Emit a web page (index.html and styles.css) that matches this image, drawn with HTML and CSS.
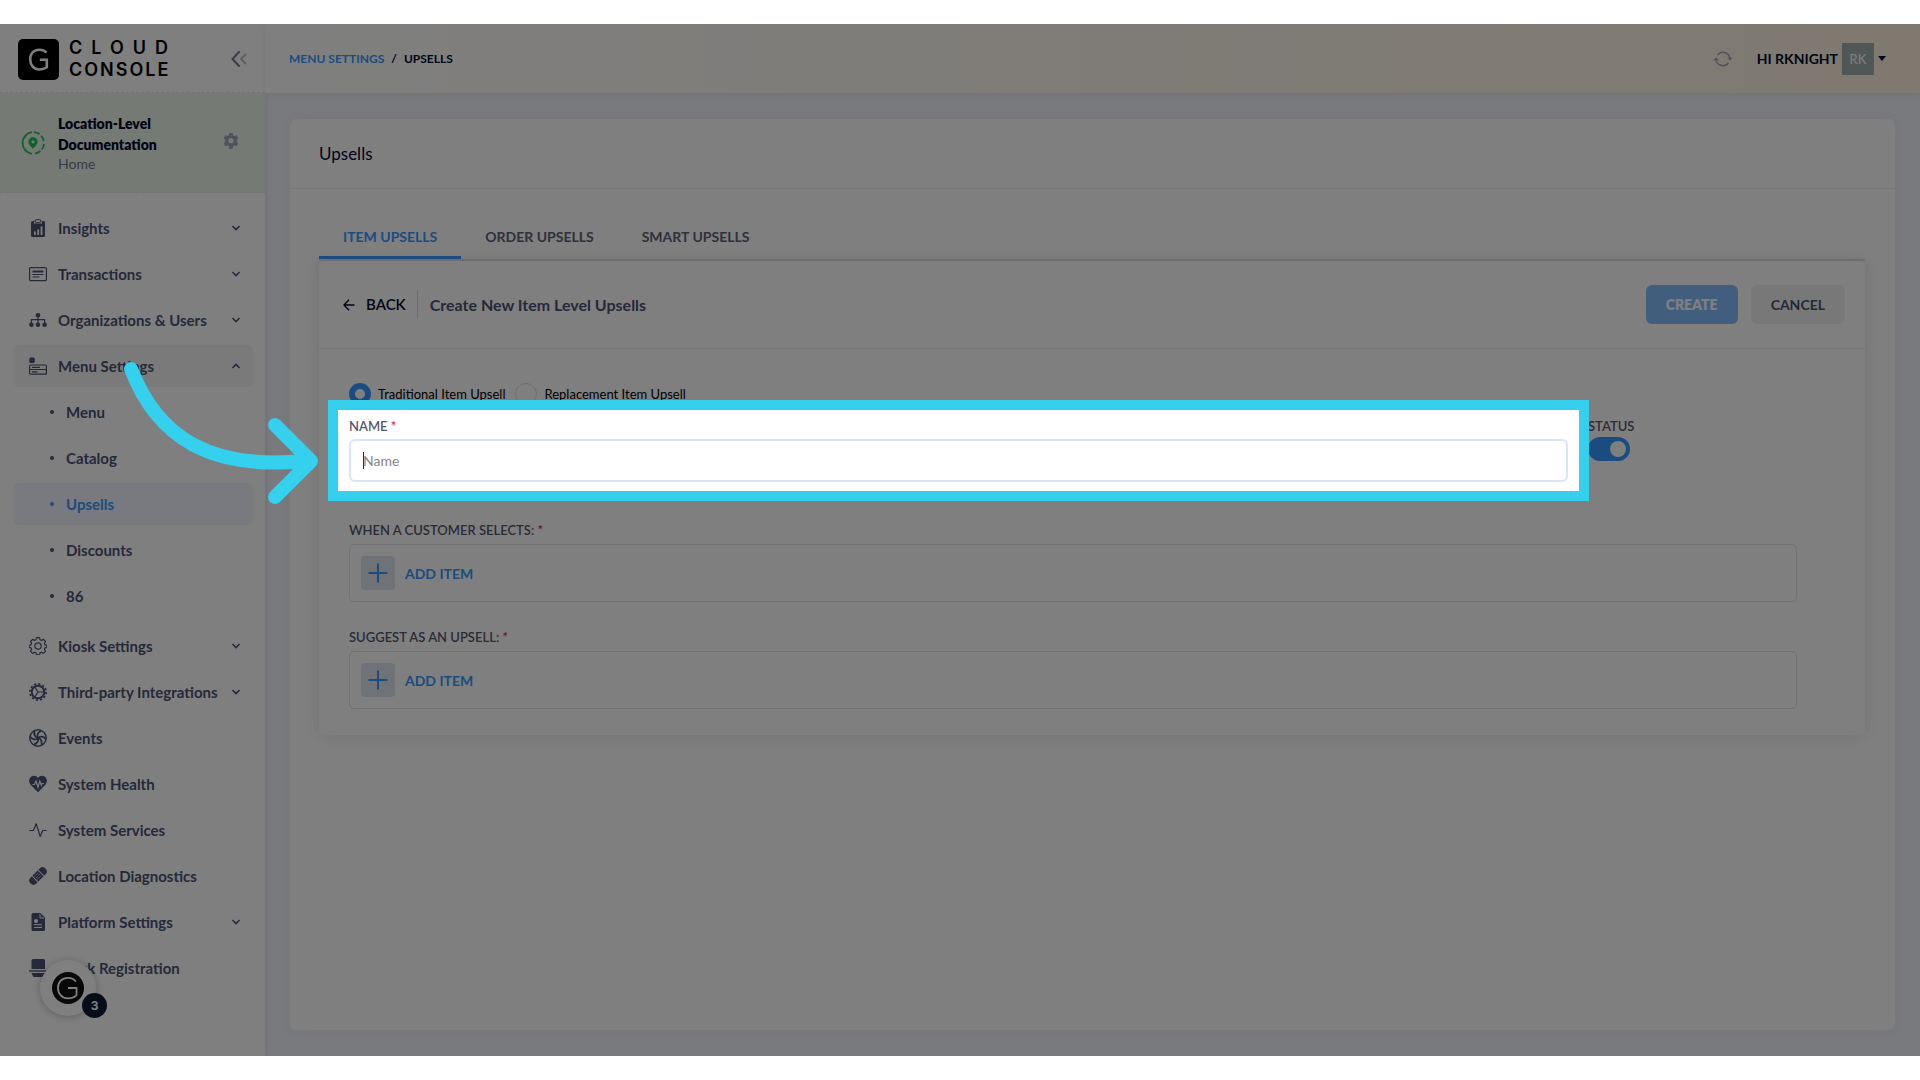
FILE: index.html
```html
<!DOCTYPE html>
<html lang="en">

<head>
    <meta charset="UTF-8">
    <meta name="viewport" content="width=device-width, initial-scale=1.0">
    <title>Cloud Console - Upsells</title>
    <link rel="stylesheet" href="styles.css">
</head>

<body>
    <!-- shared icons -->
    <svg class="sprite" aria-hidden="true">
        <symbol id="chevron" viewBox="0 0 10 10"><path d="M1.5 3l3.5 3.6L8.500 3" fill="none" stroke="currentColor" stroke-width="1.6"/></symbol>
        <symbol id="plus" viewBox="0 0 20 20"><path d="M10 .5v19M.5 10h19" stroke="currentColor" stroke-width="2"/></symbol>
    </svg>

    <div class="app">
        <aside class="sidebar">
            <div class="brand">
                <a href="#" class="logo">
                    <svg class="logo-mark" viewBox="0 0 41 41" aria-hidden="true">
                        <rect width="41" height="41" rx="5" fill="#000"/>
                        <path d="M28.500 13.500C26.500 11.500 24.500 10.700 21.500 10.700c-5.800 0-9.300 4-9.300 9.800s3.600 10 9.300 10c3.200 0 5.400-.8 7.300-2.200v-7.600h-7" fill="none" stroke="#fff" stroke-width="2.600"/>
                    </svg>
                    <span class="logo-text">
                        <span class="logo-cloud">CLOUD</span>
                        <span class="logo-console">CONSOLE</span>
                    </span>
                </a>
                <button type="button" class="collapse" aria-label="Collapse menu">
                    <svg width="16" height="16" viewBox="0 0 16 16" fill="none" stroke="currentColor" stroke-width="2" stroke-linecap="round"><path d="M8 1L1.500 8 8 15"/><path d="M14.500 3.500L10 8l4.500 4.500" opacity=".5"/></svg>
                </button>
            </div>

            <div class="location">
                <svg class="location-icon" viewBox="0 0 24 24" aria-hidden="true">
                    <path d="M11 1.200A10.900 10.900 0 0 0 11 22.800" fill="none" stroke="#1bc553" stroke-width="1.800"/>
                    <path d="M13 1.200A10.900 10.900 0 0 1 22.900 11M22.900 13A10.900 10.900 0 0 1 13 22.800" fill="none" stroke="#1bc553" stroke-width="1.800" stroke-dasharray="6 2"/>
                    <path d="M12 6.200a4.600 4.600 0 0 0-4.600 4.600c0 3 4.600 7 4.600 7s4.600-4 4.600-7A4.600 4.600 0 0 0 12 6.200zm0 3a1.600 1.600 0 1 1 0 3.200 1.600 1.600 0 0 1 0-3.200z" fill="#1bc553"/>
                </svg>
                <div class="location-text">
                    <strong>Location-Level Documentation</strong>
                    <span>Home</span>
                </div>
                <button type="button" class="location-gear" aria-label="Location settings">
                    <svg width="16" height="16" viewBox="0 0 24 24" fill="currentColor"><path fill-rule="evenodd" d="M9.500 0h5l.6 3.200 2.300 1.300 3.100-1.200 2.500 4.400-2.500 2.100v3.400l2.500 2.100-2.500 4.400-3.100-1.200-2.300 1.300-.6 4.200h-5l-.6-4.200-2.300-1.300-3.100 1.200L1 15.300l2.500-2.100V9.800L1 7.700l2.500-4.400 3.100 1.200 2.300-1.300zM12 7.500a4 4 0 1 0 0 8 4 4 0 0 0 0-8z"/></svg>
                </button>
            </div>

            <nav class="menu">
                <ul>
                    <li><a href="#">
                        <svg class="icon" viewBox="0 0 18 18"><path fill="currentColor" fill-rule="evenodd" d="M3.500 2H5v2.500h8V2h1.500A1.500 1.500 0 0 1 16 3.500v13a1.500 1.500 0 0 1-1.500 1.500h-11A1.500 1.500 0 0 1 2 16.500v-13A1.500 1.500 0 0 1 3.500 2zM5 12.500V16h1.800v-3.500zm3.300-2V16h1.800v-5.500zm3.300-3V16h1.800V7.500z"/><rect x="6" y=".6" width="6" height="3" rx="1.500" fill="none" stroke="currentColor"/></svg>
                        <span>Insights</span><svg class="chevron"><use href="#chevron"/></svg></a></li>
                    <li><a href="#">
                        <svg class="icon" viewBox="0 0 18 18" fill="none" stroke="currentColor"><rect x=".6" y="2.600" width="16.800" height="13" rx="1" stroke-width="1.200"/><path d="M3.500 6.500h11" stroke-width="2"/><path d="M3.500 9.500h11M3.500 12h7" stroke-width="1.200"/></svg>
                        <span>Transactions</span><svg class="chevron"><use href="#chevron"/></svg></a></li>
                    <li><a href="#">
                        <svg class="icon" viewBox="0 0 18 18"><g fill="currentColor"><circle cx="9" cy="4.200" r="2.300"/><circle cx="2.400" cy="13.800" r="2.300"/><circle cx="9" cy="13.800" r="2.300"/><circle cx="15.600" cy="13.800" r="2.300"/></g><path d="M9 5v8M2.400 13V8.600h13.200V13" fill="none" stroke="currentColor" stroke-width="1.200"/></svg>
                        <span>Organizations &amp; Users</span><svg class="chevron"><use href="#chevron"/></svg></a></li>
                    <li><a href="#" class="open">
                        <svg class="icon" viewBox="0 0 18 18"><rect x=".3" y=".5" width="5.500" height="5.500" rx="1.500" fill="currentColor"/><g fill="none" stroke="currentColor" stroke-width="1.200"><rect x=".6" y="8" width="16.800" height="9.200" rx="1"/><path d="M.6 12.500h16.800M3 10.300h8M3 14.900h5.500"/></g></svg>
                        <span>Menu Settings</span><svg class="chevron up"><use href="#chevron"/></svg></a>
                        <ul class="submenu">
                            <li><a href="#">Menu</a></li>
                            <li><a href="#">Catalog</a></li>
                            <li><a href="#" class="active">Upsells</a></li>
                            <li><a href="#">Discounts</a></li>
                            <li><a href="#">86</a></li>
                        </ul>
                    </li>
                    <li><a href="#">
                        <svg class="icon" viewBox="0 0 18 18" fill="none" stroke="currentColor" stroke-width="1.200"><circle cx="9" cy="9" r="3.200"/><path d="M7.500.7h3l.5 2 1.500.7 1.900-1 2.100 2.100-1.100 1.800.6 1.500 2 .5v2l-2 .6-.6 1.500 1.100 1.900-2.100 2.100-1.900-1.100-1.500.6-.5 2h-3l-.5-2-1.500-.6-1.900 1.100-2.100-2.100 1.100-1.900-.6-1.500-2-.6v-2l2-.5.6-1.500-1.100-1.800 2.100-2.100 1.900 1L7 2.700z" stroke-linejoin="round"/></svg>
                        <span>Kiosk Settings</span><svg class="chevron"><use href="#chevron"/></svg></a></li>
                    <li><a href="#">
                        <svg class="icon" viewBox="0 0 18 18" fill="none" stroke="currentColor"><circle cx="9" cy="9" r="6.300" stroke-width="2"/><circle cx="9" cy="9" r="8.100" stroke-width="1.700" stroke-dasharray="2.200 2.040"/><path d="M9 9l-3.200-5M9 9h6M9 9l-3.200 5" stroke-width="1.200"/></svg>
                        <span>Third-party Integrations</span><svg class="chevron"><use href="#chevron"/></svg></a></li>
                    <li><a href="#">
                        <svg class="icon" viewBox="0 0 18 18" fill="none" stroke="currentColor"><circle cx="9" cy="9" r="8.200" stroke-width="1.500"/><g stroke-width="1.800"><path d="M9 9C7.500 6.500 8.500 3.500 12 2"/><path d="M9 9c2.200-2 5.200-2 7.500 1"/><path d="M9 9c2.800.8 4.300 3.500 3.500 7"/><path d="M9 9c.8 2.800-.8 5.800-4 6.500"/><path d="M9 9c-2 2.200-5.200 2-7.500-1"/><path d="M9 9C6.200 8.200 4.700 5.500 5.500 2"/></g></svg>
                        <span>Events</span></a></li>
                    <li><a href="#">
                        <svg class="icon" viewBox="0 0 18 18"><path d="M9 17.200L1.800 10C-.6 7.300-.2 3.800 1.800 2 4 0 7.300.5 9 3c1.700-2.500 5-3 7.200-1 2 1.800 2.400 5.300 0 8z" fill="currentColor"/><path d="M3.500 9.500h2L7 6.200l2 6 1.800-6 1.500 4 .8-1.700h1.700" fill="none" stroke="#fff" stroke-width="1.200"/></svg>
                        <span>System Health</span></a></li>
                    <li><a href="#">
                        <svg class="icon" viewBox="0 0 18 18" fill="none" stroke="currentColor" stroke-width="1.200" stroke-linejoin="round"><path d="M.3 9.500h4.200L7.200 2.800l4 12.700 2.500-6h4"/></svg>
                        <span>System Services</span></a></li>
                    <li><a href="#">
                        <svg class="icon" viewBox="0 0 18 18"><g transform="rotate(-45 9 9)"><rect x="-1.500" y="4.800" width="21" height="8.400" rx="4" fill="currentColor"/><path d="M4.800 4.800v8.400M13.200 4.800v8.400" stroke="#fff"/><path d="M6.300 7h5.500M6.300 9h5.500M6.300 11h5.500" stroke="#fff" stroke-width=".9" stroke-dasharray="1 1"/></g></svg>
                        <span>Location Diagnostics</span></a></li>
                    <li><a href="#">
                        <svg class="icon" viewBox="0 0 18 18"><path d="M4 0h7.500L16 4.500V16.500A1.500 1.500 0 0 1 14.500 18H4a1.500 1.500 0 0 1-1.500-1.500v-15A1.500 1.500 0 0 1 4 0z" fill="currentColor"/><path d="M11 1v4h4M5 11.700h8M5 14.500h8" fill="none" stroke="#fff"/><circle cx="7" cy="8" r="2" fill="#fff"/></svg>
                        <span>Platform Settings</span><svg class="chevron"><use href="#chevron"/></svg></a></li>
                    <li><a href="#">
                        <svg class="icon" viewBox="0 0 18 18"><path d="M4 0h10.500A1.500 1.500 0 0 1 16 1.500V10H2.500V1.500A1.500 1.500 0 0 1 4 0zM2.500 14H16l-1.300 3a1.500 1.500 0 0 1-1.400 1H5.200a1.500 1.500 0 0 1-1.400-1z" fill="currentColor"/><path d="M0 12h18" stroke="currentColor" stroke-width="1.400"/></svg>
                        <span>Kiosk Registration</span></a></li>
                </ul>
            </nav>
        </aside>

        <div class="content">
            <header class="topbar">
                <div class="breadcrumb">
                    <a href="#">MENU SETTINGS</a>
                    <span>/</span>
                    <span>UPSELLS</span>
                </div>
                <div class="user">
                    <button type="button" class="refresh" aria-label="Refresh">
                        <svg width="20" height="16" viewBox="0 0 20 16" fill="none" stroke="currentColor" stroke-width="1.600"><path d="M4.500 4A7 7 0 0 1 17 8M15.500 12A7 7 0 0 1 3 8"/><path d="M14.200 6.800L17 9.800l2.700-3zM5.800 9.200L3 6.200l-2.700 3z" fill="currentColor" stroke="none"/></svg>
                    </button>
                    <span class="user-name">HI RKNIGHT</span>
                    <span class="avatar">RK</span>
                    <span class="caret"></span>
                </div>
            </header>

            <main class="card">
                <h1>Upsells</h1>
                <div class="card-body">
                    <div class="tabs">
                        <a href="#" class="active">ITEM UPSELLS</a>
                        <a href="#">ORDER UPSELLS</a>
                        <a href="#">SMART UPSELLS</a>
                    </div>

                    <form class="panel">
                        <div class="panel-header">
                            <a href="#" class="back">
                                <svg width="12" height="12" viewBox="0 0 12 12" fill="none" stroke="currentColor" stroke-width="1.400"><path d="M11.500 6H1M6 .8L.9 6 6 11.200"/></svg>
                                BACK
                            </a>
                            <h2>Create New Item Level Upsells</h2>
                            <div class="actions">
                                <button type="submit" class="btn btn-primary">CREATE</button>
                                <button type="button" class="btn">CANCEL</button>
                            </div>
                        </div>

                        <div class="panel-body">
                            <div class="radios">
                                <label><input type="radio" name="type" checked> Traditional Item Upsell</label>
                                <label><input type="radio" name="type"> Replacement Item Upsell</label>
                            </div>

                            <div class="row">
                                <div class="field name-field">
                                    <label for="name">NAME <em>*</em></label>
                                    <input type="text" id="name" placeholder="Name">
                                </div>
                                <div class="field status-field">
                                    <label for="status">STATUS</label>
                                    <input type="checkbox" id="status" class="switch" checked>
                                </div>
                            </div>

                            <div class="field">
                                <span class="label">WHEN A CUSTOMER SELECTS: <em>*</em></span>
                                <div class="items">
                                    <button type="button" class="add"><span class="add-icon"><svg width="20" height="20"><use href="#plus"/></svg></span>ADD ITEM</button>
                                </div>
                            </div>

                            <div class="field">
                                <span class="label">SUGGEST AS AN UPSELL: <em>*</em></span>
                                <div class="items">
                                    <button type="button" class="add"><span class="add-icon"><svg width="20" height="20"><use href="#plus"/></svg></span>ADD ITEM</button>
                                </div>
                            </div>
                        </div>
                    </form>
                </div>
            </main>
        </div>

        <button type="button" class="chat" aria-label="Open help">
            <svg width="32" height="32" viewBox="0 0 32 32"><circle cx="16" cy="16" r="16" fill="#111"/><path d="M24 9.500C22 7 19.500 5.800 16 5.800 9.800 5.800 6 10 6 16s4 10.400 10 10.400c3.600 0 6.400-1.200 8.500-3V16H16" fill="none" stroke="#fff" stroke-width="1.800"/></svg>
            <span class="badge">3</span>
        </button>

        <!-- tour pointer -->
        <svg class="arrow" width="200" height="150" viewBox="0 0 200 150" aria-hidden="true">
            <path d="M11 10C38 80 92 111 184 102M155 66l36 36-36 36" fill="none" stroke="#34d0ed" stroke-width="14" stroke-linecap="round" stroke-linejoin="round"/>
        </svg>
    </div>
</body>

</html>
```
FILE: styles.css
```css
* {
    box-sizing: border-box;
}

body {
    font-family: Lato, "Liberation Sans", sans-serif;
    font-size: 14px;
    margin: 0;
    padding: 24px 0;
    background-color: #fff;
    color: #00082e;
}

ul {
    list-style: none;
    margin: 0;
    padding: 0;
}

a {
    text-decoration: none;
    color: inherit;
}

button {
    font: inherit;
    color: inherit;
    border: none;
    background: none;
    padding: 0;
    cursor: pointer;
}

.sprite {
    display: none;
}

.app {
    position: relative;
    display: flex;
    min-height: calc(100vh - 48px);
    overflow: hidden;
    background-color: #f3f4fb;
}

/* sidebar */
.sidebar {
    flex: 0 0 265px;
    background-color: #fff;
    box-shadow: 0 0 6px rgba(60, 60, 90, 0.15);
}

.brand {
    display: flex;
    align-items: center;
    justify-content: space-between;
    height: 69px;
    padding: 2px 18px 0;
    border-bottom: 1px dashed #e4e6ef;
}

.logo {
    display: flex;
    align-items: center;
    gap: 10px;
    color: #000;
}

.logo-mark {
    width: 41px;
    height: 41px;
}

.logo-text {
    display: flex;
    flex-direction: column;
    font-family: Inter, sans-serif;
    font-size: 18px;
    font-weight: 600;
    line-height: 22px;
}

.logo-cloud {
    letter-spacing: 9px;
}

.logo-console {
    letter-spacing: 2px;
}

.collapse {
    color: #75798f;
    line-height: 0;
}

.location {
    display: flex;
    align-items: center;
    height: 100px;
    padding: 0 26px 0 21px;
    background-color: #ebf5eb;
    border-bottom: 1px dashed #dfe8df;
}

.location-icon {
    width: 24px;
    height: 24px;
    margin-right: 13px;
}

.location-text {
    flex: 1;
    line-height: 21px;
}

.location-text strong {
    display: block;
    width: 120px;
    font-weight: 800;
}

.location-text span {
    display: block;
    line-height: 18px;
    color: #70748a;
}

.location-gear {
    margin-bottom: 4px;
    color: #a0a3b8;
    line-height: 0;
}

.menu {
    padding: 14px 12px 0 13px;
}

.menu a {
    display: flex;
    align-items: center;
    height: 42px;
    margin-bottom: 4px;
    padding: 0 12px 0 16px;
    border-radius: 6px;
    font-size: 15px;
    font-weight: 700;
    color: #4b5274;
}

.menu a.open {
    background-color: #f5f5f6;
}

.icon {
    width: 18px;
    height: 18px;
    margin-right: 11px;
}

.chevron {
    width: 10px;
    height: 10px;
    margin-left: auto;
}

.chevron.up {
    transform: rotate(180deg);
}

.submenu {
    margin-bottom: 8px;
}

.submenu a {
    padding-left: 37px;
}

.submenu a::before {
    content: "";
    width: 4px;
    height: 4px;
    margin-right: 12px;
    border-radius: 50%;
    background-color: currentColor;
}

.submenu a.active {
    background-color: #f0f5ff;
    color: #3699ff;
}

/* header */
.content {
    flex: 1;
    display: flex;
    flex-direction: column;
}

.topbar {
    display: flex;
    align-items: center;
    justify-content: space-between;
    height: 69px;
    padding: 0 34px 0 24px;
    background: linear-gradient(to right, #fff, #fff3e0);
    box-shadow: 0 2px 8px rgba(60, 60, 90, 0.08);
}

.breadcrumb {
    display: flex;
    gap: 7px;
    font-size: 12px;
    font-weight: 700;
}

.breadcrumb a {
    color: #3699ff;
}

.user {
    display: flex;
    align-items: center;
    gap: 4px;
}

.refresh {
    margin-right: 20px;
    color: #a4a6ba;
    line-height: 0;
}

.user-name {
    font-weight: 700;
}

.avatar {
    width: 32px;
    line-height: 32px;
    background-color: #9fb0ae;
    color: #fff;
    font-size: 13px;
    text-align: center;
}

.caret {
    border: 4px solid transparent;
    border-top: 5px solid #00082e;
    border-bottom: 0;
}

/* page card */
.card {
    flex: 1;
    margin: 26px 25px;
    background-color: #fff;
    border-radius: 6px;
    box-shadow: 0 0 12px rgba(80, 80, 110, 0.06);
}

.card h1 {
    margin: 0;
    padding-left: 29px;
    font-size: 17px;
    font-weight: 400;
    line-height: 69px;
    border-bottom: 1px solid #eee;
}

.card-body {
    padding: 22px 30px 0 29px;
}

.tabs {
    display: flex;
    border-bottom: 2px solid #e4e6ea;
}

.tabs a {
    padding: 6px 24px 0;
    border-bottom: 3px solid transparent;
    line-height: 39px;
    font-weight: 700;
    color: #5e6278;
}

.tabs a.active {
    color: #3699ff;
    border-color: #3699ff;
}

.panel {
    border-radius: 6px;
    box-shadow: 0 0 16px rgba(40, 40, 60, 0.14);
}

.panel-header {
    display: flex;
    align-items: center;
    height: 88px;
    padding: 0 20px 0 24px;
    border-bottom: 1px solid #ebebef;
}

.back {
    display: flex;
    align-items: center;
    gap: 11px;
    padding-right: 11px;
    border-right: 1px solid #d8dae5;
    font-size: 15px;
    font-weight: 600;
    line-height: 29px;
}

.panel-header h2 {
    margin: 0 auto 0 12px;
    font-size: 16px;
    font-weight: 700;
    color: #4b5274;
}

.actions {
    display: flex;
    gap: 13px;
}

.btn {
    height: 39px;
    padding: 0 20px;
    border-radius: 6px;
    background-color: #f1f1f3;
    color: #4b5274;
    font-weight: 700;
}

.btn-primary {
    background-color: #83bcff;
    color: #fff;
    font-weight: 800;
}

.panel-body {
    padding: 34px 68px 26px 30px;
}

.radios {
    display: flex;
    gap: 10px;
    margin-bottom: 11px;
}

.radios label {
    display: flex;
    align-items: center;
    gap: 7px;
    height: 22px;
    font-size: 13px;
    color: #000;
}

.radios input {
    appearance: none;
    width: 22px;
    height: 22px;
    margin: 0;
    border: 1px solid #dcdce4;
    border-radius: 50%;
}

.radios input:checked {
    border: 6px solid #3699ff;
}

.row {
    display: flex;
    gap: 20px;
}

.field {
    margin-bottom: 25px;
}

.field label,
.field .label {
    display: block;
    line-height: 20px;
    margin-bottom: 4px;
    color: #55586e;
    font-size: 13px;
    font-weight: 600;
}

.field em {
    color: #e6194b;
    font-style: normal;
}

.row .field {
    margin-bottom: 38px;
}

.row .field label {
    margin-bottom: 3px;
}

.name-field {
    position: relative;
    flex: 1;
}

.name-field input {
    display: block;
    width: 100%;
    height: 43px;
    padding: 0 12px;
    border: 2px solid #d8e4f8;
    border-radius: 6px;
    font: inherit;
    outline: none;
}

.name-field input::placeholder {
    color: #858585;
}

/* text cursor */
.name-field::before {
    content: "";
    position: absolute;
    left: 14px;
    bottom: 13px;
    width: 1px;
    height: 17px;
    background-color: #222b55;
}

/* tour spotlight, the shadow dims the rest of the app */
.name-field::after {
    content: "";
    position: absolute;
    z-index: 10;
    inset: -16px -21px -19px;
    border: 10px solid #34d0ed;
    box-shadow: 0 0 0 3000px rgba(0, 0, 0, 0.5);
    pointer-events: none;
}

.status-field {
    flex: 0 0 209px;
}

.row .status-field label {
    margin-bottom: 1px;
}

.switch {
    appearance: none;
    display: block;
    width: 42px;
    height: 24px;
    margin: 0;
    padding: 4px;
    border-radius: 12px;
    background-color: #3699ff;
}

.switch::before {
    content: "";
    display: block;
    width: 16px;
    height: 16px;
    margin-left: auto;
    border-radius: 50%;
    background-color: #fff;
}

.items {
    padding: 11px;
    border: 1px solid #e0e0ea;
    border-radius: 5px;
}

.panel .field:last-child {
    margin-bottom: 0;
}

.add {
    display: flex;
    align-items: center;
    gap: 10px;
    color: #3699ff;
    font-weight: 700;
}

.add-icon {
    display: flex;
    align-items: center;
    justify-content: center;
    width: 34px;
    height: 34px;
    border-radius: 4px;
    background-color: #dfe6f1;
}

/* floating help button */
.chat {
    position: absolute;
    left: 40px;
    bottom: 40px;
    width: 56px;
    height: 56px;
    border-radius: 50%;
    background-color: #fff;
    box-shadow: 0 1px 8px rgba(0, 0, 0, 0.25);
    line-height: 0;
}

.badge {
    position: absolute;
    right: -11px;
    bottom: -2px;
    width: 25px;
    border-radius: 50%;
    background-color: #0c1a30;
    color: #fff;
    font-family: Inter, sans-serif;
    font-size: 12px;
    font-weight: 700;
    line-height: 25px;
}

.arrow {
    position: absolute;
    z-index: 11;
    left: 120px;
    top: 335px;
}
```
